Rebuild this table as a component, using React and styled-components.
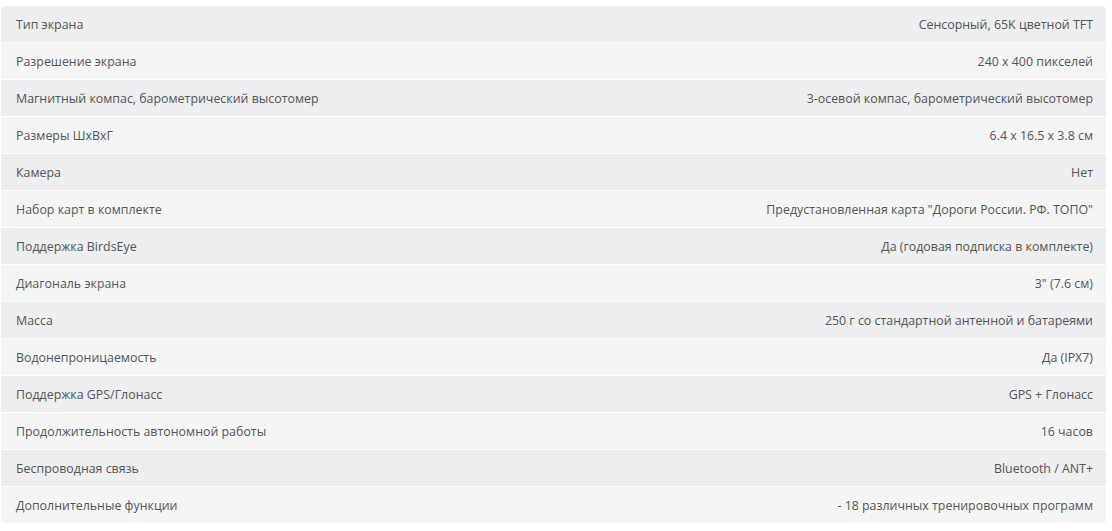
import styled, { createGlobalStyle } from "styled-components"

const Global = createGlobalStyle`
body {
  margin: 0;
  background: #ffffff;
  font-family: "Open Sans", "Noto Sans", sans-serif;
}
`

const Page = styled.div`
padding: 6px 6px 8px 1px;
`

const Table = styled.div`
display: flex;
flex-direction: column;
gap: 1px;
border-radius: 4px;
overflow: hidden;
background: #ffffff;
`

const Row = styled.div`
display: flex;
justify-content: space-between;
align-items: center;
height: 36px;
padding: 0 13px 0 15px;
background-color: ${({ $odd }) => ($odd ? "#eceeef" : "#f4f5f5")};
font-size: 12.4px;
color: #555555;
`

const Name = styled.span``

const Value = styled.span`
text-align: right;
`

const specs = [
  ["Тип экрана", "Сенсорный, 65K цветной TFT"],
  ["Разрешение экрана", "240 x 400 пикселей"],
  ["Магнитный компас, барометрический высотомер", "3-осевой компас, барометрический высотомер"],
  ["Размеры ШхВхГ", "6.4 x 16.5 x 3.8 см"],
  ["Камера", "Нет"],
  ["Набор карт в комплекте", "Предустановленная карта \"Дороги России. РФ. ТОПО\""],
  ["Поддержка BirdsEye", "Да (годовая подписка в комплекте)"],
  ["Диагональ экрана", "3\" (7.6 см)"],
  ["Масса", "250 г со стандартной антенной и батареями"],
  ["Водонепроницаемость", "Да (IPX7)"],
  ["Поддержка GPS/Глонасс", "GPS + Глонасс"],
  ["Продолжительность автономной работы", "16 часов"],
  ["Беспроводная связь", "Bluetooth / ANT+"],
  ["Дополнительные функции", "- 18 различных тренировочных программ"],
]

const App = () => {
  return (
    <Page>
      <Global />
      <Table>
        {specs.map(([name, value], i) => (
          <Row key={name} $odd={i % 2 === 0}>
            <Name>{name}</Name>
            <Value>{value}</Value>
          </Row>
        ))}
      </Table>
    </Page>
  )
}
export default App
